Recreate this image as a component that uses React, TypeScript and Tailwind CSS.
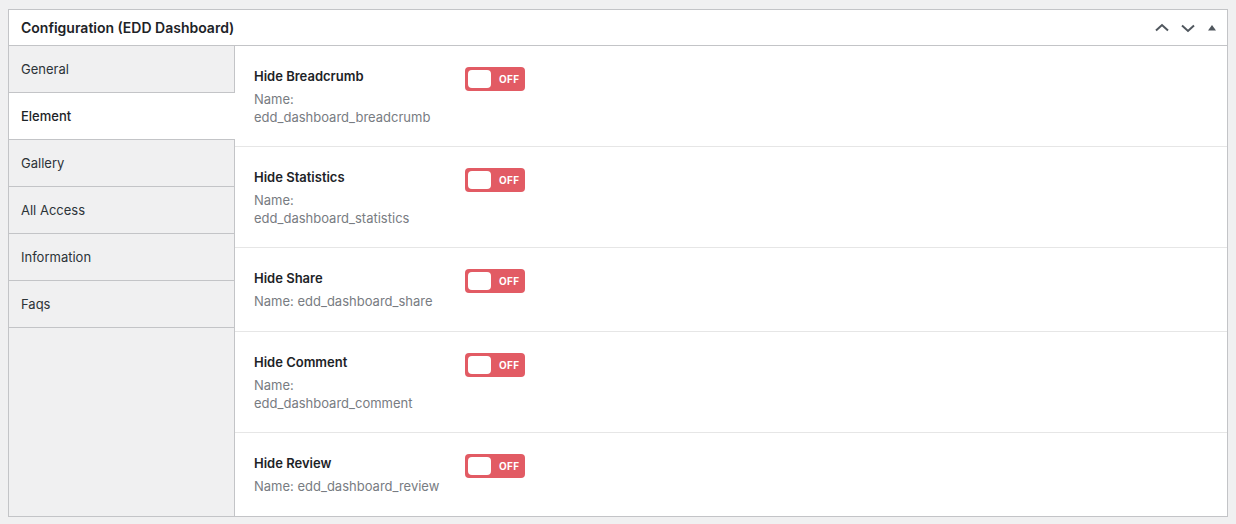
import React from 'react';

const tabs = ['General', 'Element', 'Gallery', 'All Access', 'Information', 'Faqs'];

const fields = [
  { label: 'Hide Breadcrumb', name: 'edd_dashboard_breadcrumb', wrap: true },
  { label: 'Hide Statistics', name: 'edd_dashboard_statistics', wrap: true },
  { label: 'Hide Share', name: 'edd_dashboard_share', wrap: false },
  { label: 'Hide Comment', name: 'edd_dashboard_comment', wrap: true },
  { label: 'Hide Review', name: 'edd_dashboard_review', wrap: false },
];

function Toggle() {
  return (
    <div className="w-[60px] h-[24px] rounded-[4px] bg-[#e25b64] flex items-center pl-[3px] gap-[8px]">
      <span className="w-[23px] h-[18px] rounded-[4px] bg-white" />
      <span className="text-[10px] font-bold text-white tracking-[0.3px]">OFF</span>
    </div>
  );
}

export default function App() {
  return (
    <div className="w-[1236px] h-[524px] bg-[#f0f0f1] pt-[9px] px-[8px] font-['Inter','Noto_Sans',sans-serif] text-[#1d2327]">
      <div className="bg-white border border-[#c3c4c7] h-[508px] flex flex-col">
        {/* header */}
        <div className="h-[36px] border-b border-[#c3c4c7] flex items-center justify-between pl-[12px] pr-[8px]">
          <h2 className="text-[14px] font-semibold">Configuration (EDD Dashboard)</h2>
          <div className="flex items-center gap-[8px] text-[#50575e]">
            <svg width="18" height="18" viewBox="0 0 18 18" fill="none" stroke="currentColor" strokeWidth="2">
              <path d="M3 11.5 9 6l6 5.5" />
            </svg>
            <svg width="18" height="18" viewBox="0 0 18 18" fill="none" stroke="currentColor" strokeWidth="2">
              <path d="M3 6.5 9 12l6-5.5" />
            </svg>
            <svg width="14" height="18" viewBox="0 0 14 18" fill="currentColor">
              <path d="M3 11.5 7 6l4 5.5z" />
            </svg>
          </div>
        </div>

        <div className="flex flex-1 min-h-0">
          {/* tabs */}
          <div className="w-[226px] bg-[#f0f0f1] border-r border-[#c3c4c7] flex flex-col">
            {tabs.map((t) => {
              const active = t === 'Element';
              return (
                <div
                  key={t}
                  className={`h-[47px] flex items-center pl-[12px] pt-[2px] text-[13px] border-b border-[#c3c4c7] ${
                    active ? 'bg-white font-medium mr-[-1px] text-[#1d2327]' : 'text-[#2c3338]'
                  }`}
                >
                  {t}
                </div>
              );
            })}
          </div>

          {/* fields */}
          <div className="flex-1 flex flex-col">
            {fields.map((f, i) => (
              <div
                key={f.name}
                className={`flex items-start pl-[19px] pt-[20px] ${f.wrap ? 'pb-[20px]' : 'pb-[21px]'} ${
                  i < fields.length - 1 ? 'border-b border-[#e6e6e6]' : ''
                }`}
              >
                <div className="w-[211px]">
                  <div className="text-[13px] font-semibold leading-[20px] text-[#1d2327]">{f.label}</div>
                  <div className="mt-[4px] text-[13px] leading-[18px] text-[#787c82]">
                    {f.wrap ? (
                      <>
                        Name:
                        <br />
                        {f.name}
                      </>
                    ) : (
                      <>Name: {f.name}</>
                    )}
                  </div>
                </div>
                <div className="pt-[1px]">
                  <Toggle />
                </div>
              </div>
            ))}
          </div>
        </div>
      </div>
    </div>
  );
}
